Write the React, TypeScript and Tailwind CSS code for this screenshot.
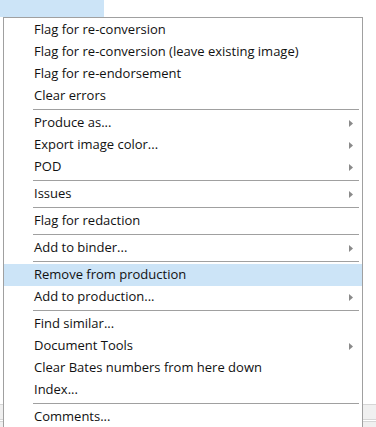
import React from 'react';

type Entry = { label: string; sub?: boolean; active?: boolean } | 'sep';

const ITEMS: Entry[] = [
  { label: 'Flag for re-conversion' },
  { label: 'Flag for re-conversion (leave existing image)' },
  { label: 'Flag for re-endorsement' },
  { label: 'Clear errors' },
  'sep',
  { label: 'Produce as...', sub: true },
  { label: 'Export image color...', sub: true },
  { label: 'POD', sub: true },
  'sep',
  { label: 'Issues', sub: true },
  'sep',
  { label: 'Flag for redaction' },
  'sep',
  { label: 'Add to binder...', sub: true },
  'sep',
  { label: 'Remove from production', active: true },
  { label: 'Add to production...', sub: true },
  'sep',
  { label: 'Find similar...' },
  { label: 'Document Tools', sub: true },
  { label: 'Clear Bates numbers from here down' },
  { label: 'Index...' },
  'sep',
  { label: 'Comments...' },
];

function Arrow() {
  return (
    <svg width="4" height="7" viewBox="0 0 4 7" className="shrink-0">
      <path d="M0 0 L4 3.5 L0 7 Z" fill="#8a8a8a" />
    </svg>
  );
}

export default function App() {
  return (
    <div
      className="relative h-[427px] w-[376px] overflow-hidden bg-white"
      style={{ fontFamily: '"Open Sans", "Noto Sans", sans-serif' }}
    >
      {/* selected cell behind the menu */}
      <div className="h-[17px] w-[104px] bg-[#cce4f7]" />

      {/* grid rows peeking out at the bottom */}
      <div className="absolute left-0 right-0 top-[404px] h-[16px] border-y border-[#d6d6d6] bg-[#f0f0f0]" />
      <div className="absolute left-0 right-0 top-[421px] h-[6px] border-t border-[#d6d6d6] bg-[#f0f0f0]" />

      {/* context menu */}
      <div className="absolute left-[3px] top-[17px] w-[360px] border border-[#a0a0a0] bg-white pt-px pb-2">
        {ITEMS.map((it, i) =>
          it === 'sep' ? (
            <div key={i} className="my-[2px] ml-[29px] mr-[3px] h-px bg-[#a0a0a0]" />
          ) : (
            <div
              key={i}
              className={[
                'flex h-[22px] items-center pl-[30px] pr-[9px] text-[13px] text-[#111]',
                it.active ? 'bg-[#cce4f7]' : '',
              ].join(' ')}
            >
              <span className="flex-1 whitespace-nowrap">{it.label}</span>
              {it.sub && <Arrow />}
            </div>
          ),
        )}
      </div>
    </div>
  );
}
